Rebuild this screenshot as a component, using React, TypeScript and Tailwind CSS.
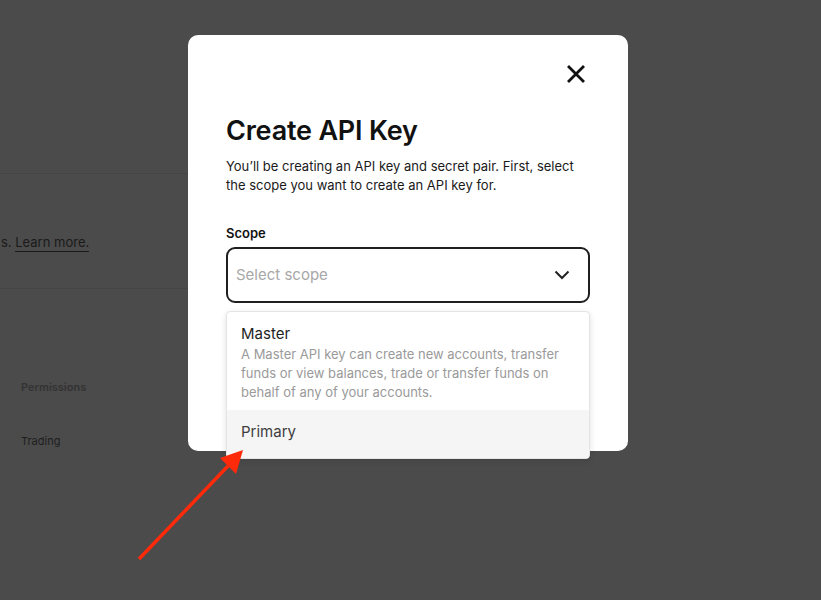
import React from "react";

export default function App() {
  return (
    <div
      className="relative w-[821px] h-[600px] overflow-hidden bg-[#4b4b4b]"
      style={{ fontFamily: "Inter, 'Noto Sans', sans-serif" }}
    >
      {/* background page (dimmed) */}
      <div className="w-[420px]">
        <div className="h-[174px] border-b border-[#444444]" />
        <div className="h-[115px] border-b border-[#444444] flex items-center">
          <p className="text-[13px] text-[#1a1a1a] ml-[1px] mt-[24px]">
            s.{" "}
            <span className="border-b border-[#1a1a1a] pb-[1px]">Learn more.</span>
          </p>
        </div>
        <div className="pl-[21px] pt-[91px] text-[11px]">
          <div className="font-semibold text-[#333333] leading-[14px]">Permissions</div>
          <div className="mt-[40px] text-[#1f1f1f] leading-[14px]">Trading</div>
        </div>
      </div>

      {/* modal */}
      <div className="absolute left-[188px] top-[35px] w-[440px] h-[416px] bg-white rounded-[10px] px-[38px] pt-[29px]">
        <div className="flex justify-end pr-[5px]">
          <svg width="18" height="18" viewBox="0 0 18 18" className="mt-[1px]">
            <path d="M2 2 L16 16 M16 2 L2 16" stroke="#111" strokeWidth="2.8" strokeLinecap="square" />
          </svg>
        </div>
        <h1 className="mt-[32px] text-[27px] leading-[32px] font-semibold text-[#111111] tracking-[-0.2px]">
          Create API Key
        </h1>
        <p className="mt-[10px] text-[13px] leading-[19px] text-[#1a1a1a]">
          You’ll be creating an API key and secret pair. First, select the scope you want to create an API key for.
        </p>
        <div className="mt-[30px] text-[13px] font-semibold text-[#111111] leading-[16px]">Scope</div>
        <div className="mt-[6px] h-[56px] border-2 border-[#1f1f1f] rounded-[9px] flex items-center justify-between pl-[8px] pr-[18px]">
          <span className="text-[15px] text-[#a8a8a8]">Select scope</span>
          <svg width="16" height="10" viewBox="0 0 16 10">
            <path d="M1.5 1.5 L8 8 L14.5 1.5" fill="none" stroke="#222" strokeWidth="2" />
          </svg>
        </div>
      </div>

      {/* dropdown */}
      <div className="absolute left-[226px] top-[311px] w-[364px] bg-white border border-[#e4e4e4] rounded-[4px] shadow-[0_2px_6px_rgba(0,0,0,0.12)] overflow-hidden">
        <div className="px-[14px] pt-[12px] pb-[8px]">
          <div className="text-[15px] leading-[20px] text-[#1f1f1f]">Master</div>
          <div className="mt-[1px] text-[13px] leading-[19px] text-[#9a9a9a]">
            A Master API key can create new accounts, transfer funds or view balances, trade or transfer funds on behalf of any of your accounts.
          </div>
        </div>
        <div className="bg-[#f5f5f5] h-[48px] px-[14px] flex items-center">
          <span className="text-[15px] text-[#3d3d3d] -mt-[4px]">Primary</span>
        </div>
      </div>

      {/* arrow */}
      <svg className="absolute left-0 top-0" width="821" height="600" viewBox="0 0 821 600">
        <line x1="139" y1="559" x2="228" y2="466" stroke="#ff2a0a" strokeWidth="3.5" />
        <polygon points="243,450 220,458 236,474" fill="#ff2a0a" />
      </svg>
    </div>
  );
}
